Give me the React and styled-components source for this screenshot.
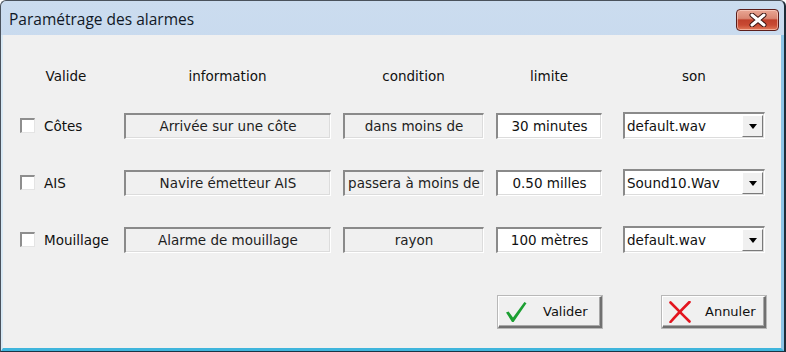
import styled, { createGlobalStyle } from "styled-components";

const GlobalStyle = createGlobalStyle`
  html, body {
    margin: 0;
    padding: 0;
    background: #ffffff;
  }
  body {
    font-family: "DejaVu Sans", Tahoma, sans-serif;
  }
`;

const Window = styled.div`
  width: 786px;
  height: 352px;
  box-sizing: border-box;
  display: flex;
  flex-direction: column;
  border-top: 1px solid #4a525c;
  border-left: 1px solid #4a525c;
  border-right: 2px solid #1d2c38;
  border-bottom: 1px solid #1b3444;
  border-radius: 6px 6px 0 0;
  background: linear-gradient(#cbdcef, #b8cfe9);
  overflow: hidden;
`;

const TitleBar = styled.div`
  height: 34px;
  flex: none;
  display: flex;
  align-items: center;
  justify-content: space-between;
  padding: 0 5px 0 8px;
  box-sizing: border-box;
`;

const Title = styled.span`
  font-family: "Open Sans", "Noto Sans", sans-serif;
  font-size: 15.5px;
  color: #101826;
  margin-top: 2px;
`;

const CloseButton = styled.div`
  width: 43px;
  height: 22px;
  margin-top: 4px;
  box-sizing: border-box;
  border: 1px solid #5b1d1a;
  border-radius: 4px;
  background: linear-gradient(#e9a694 0%, #d98672 42%, #c0412c 50%, #c84a33 75%, #e27a5a 100%);
  box-shadow: inset 0 0 0 1px rgba(255, 220, 210, 0.55);
  display: flex;
  align-items: center;
  justify-content: center;
`;

const Body = styled.div`
  flex: 1;
  background: #f0f0f0;
  border-left: 2px solid #d8e9f5;
  border-right: 3px solid #8cc4e6;
  border-bottom: 3px solid #3fb5dc;
  padding: 33px 15px 0 17px;
  display: flex;
  flex-direction: column;
  font-size: 13.5px;
  color: #111;
`;

const Grid = styled.div`
  display: grid;
  grid-template-columns: 92px 207px 141px 106px 151px;
  column-gap: 12px;
  align-items: center;
`;

const HeaderRow = styled(Grid)`
  height: 16px;
  margin-bottom: 28px;
`;

const HeaderCell = styled.div`
  text-align: center;
  line-height: 16px;
  ${({ $end }) => $end && `justify-self: end; width: 142px;`}
`;

const Rows = styled.div`
  display: flex;
  flex-direction: column;
  gap: 31px;
`;

const Row = styled(Grid)`
  height: 26px;
`;

const CheckLabel = styled.label`
  display: flex;
  align-items: center;
  gap: 9px;
`;

const CheckBox = styled.span`
  width: 15px;
  height: 15px;
  box-sizing: border-box;
  background: #ffffff;
  border-top: 2px solid #8e8e8e;
  border-left: 2px solid #8e8e8e;
  border-right: 1px solid #e4e4e4;
  border-bottom: 1px solid #e4e4e4;
`;

const Sunken = styled.div`
  height: 26px;
  box-sizing: border-box;
  border-top: 2px solid #8a8a8a;
  border-left: 2px solid #8a8a8a;
  border-right: 1px solid #ffffff;
  border-bottom: 1px solid #ffffff;
  box-shadow: inset -1px -1px 0 #dcdcdc;
  display: flex;
  align-items: center;
  overflow: hidden;
  white-space: nowrap;
`;

const ReadOnlyField = styled(Sunken)`
  background: #f0f0f0;
  justify-content: center;
  color: #1e1e1e;
`;

const InputField = styled(Sunken)`
  background: #ffffff;
  justify-content: center;
`;

const Select = styled(Sunken)`
  background: #ffffff;
  width: 142px;
  justify-self: end;
  justify-content: space-between;
  padding: 0 1px 0 2px;
  height: 27px;
`;

const DropButton = styled.span`
  width: 21px;
  height: 22px;
  box-sizing: border-box;
  background: #f0f0f0;
  border-top: 1px solid #ffffff;
  border-left: 1px solid #ffffff;
  border-right: 1px solid #7a7a7a;
  border-bottom: 1px solid #7a7a7a;
  display: flex;
  align-items: center;
  justify-content: center;
  &::after {
    content: "";
    border-left: 4px solid transparent;
    border-right: 4px solid transparent;
    border-top: 5px solid #000;
  }
`;

const Footer = styled.div`
  margin-top: 44px;
  display: flex;
  justify-content: flex-end;
  gap: 60px;
`;

const Button = styled.button`
  width: 104px;
  height: 32px;
  box-sizing: border-box;
  background: #f0f0f0;
  border-top: 1px solid #ffffff;
  border-left: 1px solid #ffffff;
  border-right: 2px solid #707070;
  border-bottom: 2px solid #707070;
  box-shadow: inset -1px -1px 0 #a8a8a8, 0 0 0 1px #b8b8b8;
  font-family: inherit;
  font-size: 13px;
  color: #111;
  display: flex;
  align-items: center;
  padding: 0 0 0 6px;
  gap: ${({ $gap }) => $gap}px;
`;

const CheckIcon = () => (
  <svg width="22" height="22" viewBox="0 0 22 22">
    <path d="M1 11.5 L3.6 10.4 L8 16.6 L19.4 1 L21.5 2.2 L8.6 21 L7 21 Z" fill="#1c9f32" />
  </svg>
);

const CrossIcon = () => (
  <svg width="22" height="22" viewBox="0 0 22 22">
    <path d="M1.5 1.5 C7 7 14 14 20.5 20.5" stroke="#e3141e" strokeWidth="2.6" fill="none" strokeLinecap="round" />
    <path d="M20.5 1 C14 7.5 8 13.5 1.5 21" stroke="#e3141e" strokeWidth="2.6" fill="none" strokeLinecap="round" />
  </svg>
);

const CloseGlyph = () => (
  <svg width="18" height="14" viewBox="0 0 18 14">
    <path d="M3 2 L15 12 M15 2 L3 12" stroke="#3b1411" strokeWidth="5" strokeLinecap="round" />
    <path d="M3 2 L15 12 M15 2 L3 12" stroke="#ffffff" strokeWidth="3" strokeLinecap="round" />
  </svg>
);

const alarms = [
  { label: "Côtes", info: "Arrivée sur une côte", condition: "dans moins de", limit: "30 minutes", sound: "default.wav" },
  { label: "AIS", info: "Navire émetteur AIS", condition: "passera à moins de", limit: "0.50 milles", sound: "Sound10.Wav" },
  { label: "Mouillage", info: "Alarme de mouillage", condition: "rayon", limit: "100 mètres", sound: "default.wav" },
];

export default function App() {
  return (
    <>
      <GlobalStyle />
      <Window>
        <TitleBar>
          <Title>Paramétrage des alarmes</Title>
          <CloseButton>
            <CloseGlyph />
          </CloseButton>
        </TitleBar>
        <Body>
          <HeaderRow>
            <HeaderCell>Valide</HeaderCell>
            <HeaderCell>information</HeaderCell>
            <HeaderCell>condition</HeaderCell>
            <HeaderCell>limite</HeaderCell>
            <HeaderCell $end>son</HeaderCell>
          </HeaderRow>
          <Rows>
            {alarms.map((a) => (
              <Row key={a.label}>
                <CheckLabel>
                  <CheckBox />
                  {a.label}
                </CheckLabel>
                <ReadOnlyField>{a.info}</ReadOnlyField>
                <ReadOnlyField>{a.condition}</ReadOnlyField>
                <InputField>{a.limit}</InputField>
                <Select>
                  <span>{a.sound}</span>
                  <DropButton />
                </Select>
              </Row>
            ))}
          </Rows>
          <Footer>
            <Button $gap={16}>
              <CheckIcon />
              Valider
            </Button>
            <Button $gap={14}>
              <CrossIcon />
              Annuler
            </Button>
          </Footer>
        </Body>
      </Window>
    </>
  );
}
